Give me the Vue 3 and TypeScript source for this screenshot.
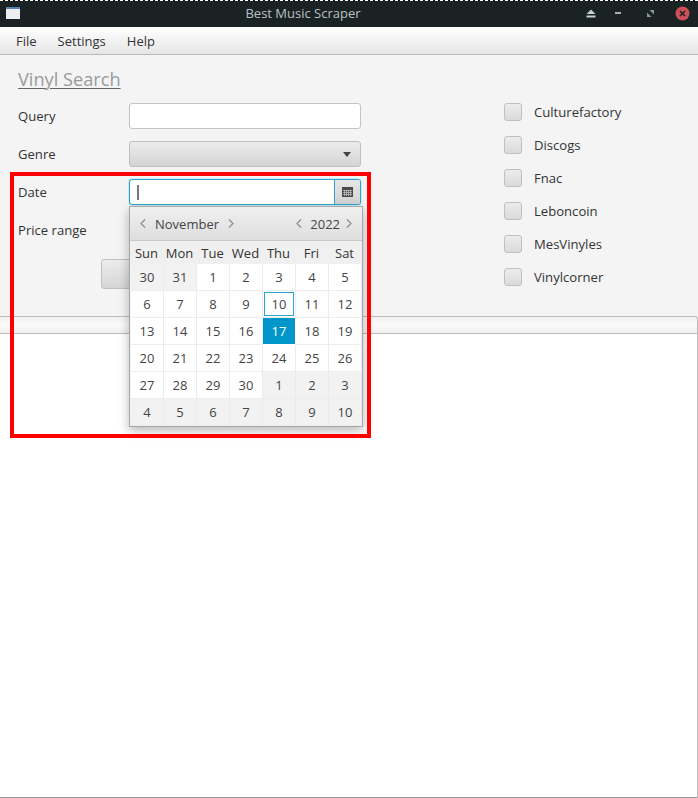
<script setup lang="ts">
const menus = ['File', 'Settings', 'Help']
const sources = ['Culturefactory', 'Discogs', 'Fnac', 'Leboncoin', 'MesVinyles', 'Vinylcorner']
const weekdays = ['Sun', 'Mon', 'Tue', 'Wed', 'Thu', 'Fri', 'Sat']
interface Day { n: number; muted: boolean; today: boolean; selected: boolean }
const prev = [30, 31]
const days: Day[] = []
for (const n of prev) days.push({ n, muted: true, today: false, selected: false })
for (let n = 1; n <= 30; n++) days.push({ n, muted: false, today: n === 10, selected: n === 17 })
for (let n = 1; n <= 10; n++) days.push({ n, muted: true, today: false, selected: false })
</script>

<template>
  <div class="window">
    <header class="titlebar">
      <svg class="app-icon" width="16" height="14" viewBox="0 0 16 14">
        <rect x="1" y="1" width="14" height="12" fill="#e4e6e8" />
        <rect x="1" y="1" width="14" height="2" fill="#5a7fb0" />
        <rect x="1" y="3" width="14" height="10" fill="#eceef0" />
      </svg>
      <span class="title">Best Music Scraper</span>
      <svg class="ctl ctl-eject" width="10" height="9" viewBox="0 0 10 9">
        <path d="M5 0.5 L9.5 5 H0.5 Z" fill="#c5cfcf" />
        <rect x="0.5" y="6.5" width="9" height="2" fill="#c5cfcf" />
      </svg>
      <svg class="ctl ctl-min" width="8" height="3" viewBox="0 0 8 3">
        <rect x="1" y="0" width="6" height="2" fill="#a9b1b1" />
      </svg>
      <svg class="ctl ctl-max" width="7" height="7" viewBox="0 0 7 7">
        <path d="M2.5 0 H7 V4.5 Z M0 2.5 L4.5 7 H0 Z" fill="#8d9696" />
      </svg>
      <svg class="ctl ctl-close" width="15" height="15" viewBox="0 0 15 15">
        <circle cx="7.5" cy="7.5" r="7" fill="#cd5058" />
        <path d="M5 5 L10 10 M10 5 L5 10" stroke="#1f2426" stroke-width="1.6" />
      </svg>
    </header>

    <nav class="menubar">
      <span v-for="m in menus" :key="m" class="menu-item">{{ m }}</span>
    </nav>

    <main class="content">
      <section class="form-col">
        <h1 class="heading">Vinyl Search</h1>
        <div class="form-grid">
          <label class="lbl">Query</label>
          <div class="input"></div>
          <label class="lbl">Genre</label>
          <div class="combo"><i class="arrow"></i></div>
          <label class="lbl">Date</label>
          <div class="date-field">
            <div class="date-input"><span class="caret"></span></div>
            <div class="date-btn">
              <svg width="11" height="10" viewBox="0 0 11 10">
                <rect x="0" y="0" width="11" height="10" fill="#4a4a4a" />
                <path d="M1 3.5 H10 M1 5.5 H10 M1 7.5 H10 M2.5 3 V9 M4.5 3 V9 M6.5 3 V9 M8.5 3 V9" stroke="#c9c9c9" stroke-width="0.7" />
              </svg>
            </div>
            <div class="popup">
              <div class="cal-head">
                <div class="spinner month">
                  <svg class="chev" width="6" height="9" viewBox="0 0 6 9"><path d="M5 0.5 L1 4.5 L5 8.5" /></svg>
                  <span class="spin-label">November</span>
                  <svg class="chev" width="6" height="9" viewBox="0 0 6 9"><path d="M1 0.5 L5 4.5 L1 8.5" /></svg>
                </div>
                <div class="spinner year">
                  <svg class="chev" width="6" height="9" viewBox="0 0 6 9"><path d="M5 0.5 L1 4.5 L5 8.5" /></svg>
                  <span class="spin-label">2022</span>
                  <svg class="chev" width="6" height="9" viewBox="0 0 6 9"><path d="M1 0.5 L5 4.5 L1 8.5" /></svg>
                </div>
              </div>
              <div class="cal-week">
                <span v-for="w in weekdays" :key="w" class="wd">{{ w }}</span>
              </div>
              <div class="cal-grid">
                <span
                  v-for="(d, i) in days"
                  :key="i"
                  class="cell"
                  :class="{ muted: d.muted, today: d.today, selected: d.selected }"
                >{{ d.n }}</span>
              </div>
            </div>
          </div>
          <label class="lbl">Price range</label>
          <div class="input"></div>
        </div>
        <div class="search-btn"></div>
      </section>

      <section class="checks">
        <div v-for="s in sources" :key="s" class="check">
          <span class="box"></span>
          <span class="check-label">{{ s }}</span>
        </div>
      </section>
    </main>

    <div class="table-head"></div>
    <div class="table-body"></div>

    <div class="annotation"></div>
  </div>
</template>

<style>
html, body { margin: 0; background: #fff; }
</style>

<style scoped>
.window {
  position: relative;
  width: 698px;
  height: 798px;
  display: flex;
  flex-direction: column;
  overflow: hidden;
  font-family: "Open Sans", sans-serif;
  font-size: 13.1px;
  color: #333;
  background: #f4f4f4;
}
.titlebar {
  position: relative;
  flex: none;
  height: 27px;
  box-sizing: border-box;
  padding-right: 92px;
  background:
    repeating-linear-gradient(90deg, #fff 0 3px, #111 3px 5px) top left / 100% 1px no-repeat,
    #1a2224;
}
.title {
  display: block;
  text-align: center;
  line-height: 27px;
  color: #b9c1c1;
  font-size: 13px;
}
.app-icon { position: absolute; left: 5px; top: 6px; }
.ctl { position: absolute; }
.ctl-eject { left: 586px; top: 9px; }
.ctl-min { left: 614px; top: 12px; }
.ctl-max { left: 647px; top: 10px; }
.ctl-close { left: 674.5px; top: 5.5px; }

.menubar {
  flex: none;
  height: 28px;
  box-sizing: border-box;
  display: flex;
  align-items: center;
  gap: 21px;
  padding-left: 16px;
  font-size: 13px;
  background: linear-gradient(#fff, #e6e6e6);
  border-bottom: 1px solid #b8b8b8;
}
.menu-item { color: #333; }

.content {
  flex: none;
  height: 261px;
  box-sizing: border-box;
  display: flex;
  background: #f4f4f4;
}
.form-col { width: 504px; padding: 12px 0 0 18px; box-sizing: border-box; }
.heading {
  margin: 0 0 11px;
  height: 25px;
  line-height: 25px;
  font-size: 18.2px;
  font-weight: 400;
  color: #9a9a9a;
  text-decoration: underline;
  text-decoration-color: #666;
  text-decoration-thickness: 1px;
  text-underline-offset: 2px;
}
.form-grid {
  display: grid;
  grid-template-columns: 111px 232px;
  grid-auto-rows: 26px;
  row-gap: 12px;
  align-items: center;
}
.lbl { color: #333; }
.input {
  height: 26px;
  box-sizing: border-box;
  background: #fff;
  border: 1px solid #c4c4c4;
  border-radius: 3px;
}
.combo {
  position: relative;
  height: 26px;
  box-sizing: border-box;
  background: linear-gradient(#ececec, #d4d4d4);
  border: 1px solid #c0c0c0;
  border-radius: 3px;
}
.arrow {
  position: absolute;
  right: 9.5px;
  top: 10px;
  border-left: 4.5px solid transparent;
  border-right: 4.5px solid transparent;
  border-top: 5px solid #444;
}
.date-field {
  position: relative;
  display: flex;
  height: 26px;
  box-sizing: border-box;
  border: 1px solid #2ba5d3;
  border-radius: 3px;
  box-shadow: 0 0 0 0.5px #a5dcef;
  background: #fff;
  z-index: 2;
}
.date-input { flex: 1; display: flex; align-items: center; padding-left: 7px; }
.caret { width: 1.5px; height: 15px; background: #777; }
.date-btn {
  width: 25px;
  display: flex;
  align-items: center;
  justify-content: center;
  border-left: 1px solid #2ba5d3;
  background: linear-gradient(#e6e6e6, #d2d2d2);
  border-radius: 0 2px 2px 0;
}
.popup {
  position: absolute;
  left: -1px;
  top: 26px;
  width: 234px;
  height: 221px;
  box-sizing: border-box;
  border: 1px solid #a8a8a8;
  background: #f4f4f4;
  font-size: 13px;
  box-shadow: 0 4px 10px rgba(0, 0, 0, 0.28);
}
.cal-head {
  height: 34px;
  box-sizing: border-box;
  display: flex;
  justify-content: space-between;
  align-items: center;
  padding: 0 10px;
  background: linear-gradient(#f0f0f0, #dedede);
  border-bottom: 1px solid #c9c9c9;
}
.spinner { display: flex; align-items: center; }
.spin-label { color: #444; }
.month .spin-label { margin: 0 9px; }
.year .spin-label { margin: 0 6px 0 8px; }
.chev { fill: none; stroke: #8c8c8c; stroke-width: 1.2; }
.cal-week {
  height: 23px;
  display: grid;
  grid-template-columns: repeat(7, 33px);
  align-items: center;
  background: #f0f0f0;
}
.wd { text-align: center; color: #333; }
.cal-grid {
  padding-left: 1px;
  display: grid;
  grid-template-columns: repeat(7, 33px);
  grid-auto-rows: 27px;
}
.cell {
  position: relative;
  display: flex;
  align-items: center;
  justify-content: center;
  box-sizing: border-box;
  background: #fff;
  border-right: 1px solid #ececec;
  border-bottom: 1px solid #ececec;
  color: #444;
}
.cell.muted { background: #f2f2f2; }
.cell.today::after {
  content: "";
  position: absolute;
  inset: 1px;
  border: 1px solid #2aa6d0;
}
.cell.selected { background: #0096c9; color: #fff; border-color: #fff; }

.search-btn {
  margin: 16px 0 0 83px;
  width: 120px;
  height: 30px;
  box-sizing: border-box;
  background: linear-gradient(#ececec, #d6d6d6);
  border: 1px solid #c0c0c0;
  border-radius: 3px;
}
.checks {
  display: flex;
  flex-direction: column;
  gap: 15px;
  padding-top: 48px;
}
.check { display: flex; align-items: center; height: 18px; }
.box {
  width: 18px;
  height: 18px;
  box-sizing: border-box;
  background: linear-gradient(#ececec, #dadada);
  border: 1px solid #c0c0c0;
  border-radius: 3px;
  margin-right: 12px;
}
.check-label { color: #333; }

.table-head {
  flex: none;
  height: 18px;
  box-sizing: border-box;
  background: linear-gradient(#f2f2f2, #fafafa 50%, #f0f0f0);
  border-top: 1px solid #bcbcbc;
  border-bottom: 1px solid #bcbcbc;
  border-right: 1px solid #bcbcbc;
  border-radius: 0 3px 0 0;
}
.table-body {
  flex: none;
  height: 464px;
  box-sizing: border-box;
  background: #fff;
  border-right: 1px solid #bcbcbc;
  border-bottom: 1px solid #9a9a9a;
}
.annotation {
  position: absolute;
  left: 10px;
  top: 172px;
  width: 361px;
  height: 266px;
  box-sizing: border-box;
  border: 4px solid #ff0000;
  z-index: 5;
  pointer-events: none;
}
</style>
